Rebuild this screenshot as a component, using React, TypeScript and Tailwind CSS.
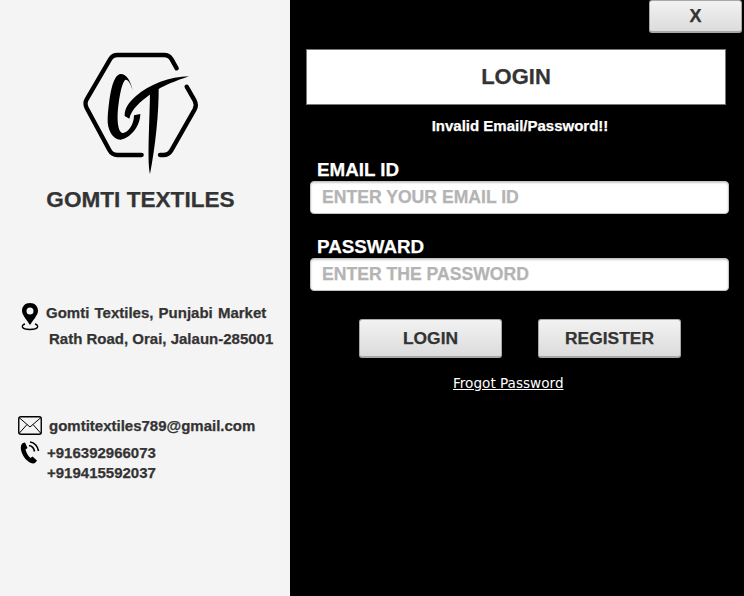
const sans = 'font-["Liberation_Sans",Arial,sans-serif]';
const heavy = '[-webkit-text-stroke:0.25px]';

function Logo() {
  return (
    <svg width="190" height="140" viewBox="0 0 570 420" className="block">
      <path
        d="M350 85 L335 58 Q327 45 312 45 L172 45 Q158 45 150 58 L80 178 Q73 190 80 204 L148 330 Q156 345 172 345 L245 345 M300 345 L310 345 Q326 345 334 331 L404 208 Q411 195 404 182 L380 140"
        fill="none"
        stroke="#000"
        strokeWidth="13"
        strokeLinecap="round"
      />
      <path
        d="M218 150 C212 125 200 102 182 102 C158 104 148 165 143 235 C141 272 160 300 182 299 C208 296 240 262 241 222 L222 226 C222 255 202 282 186 279 C172 272 170 230 176 190 C180 160 187 125 196 119 C205 118 212 132 218 150Z"
        fill="#000"
      />
      <path
        d="M387 109 C330 110 268 133 228 168 C208 185 193 205 194 228 L208 236 C214 208 240 186 275 160 C310 136 350 122 387 109Z"
        fill="#000"
      />
      <path d="M270 152 L296 136 C297 220 286 320 270 402 C261 360 269 250 270 152Z" fill="#000" />
    </svg>
  );
}

function PinIcon() {
  return (
    <svg width="20" height="29" viewBox="0 0 20 29" className="shrink-0">
      <path
        fillRule="evenodd"
        d="M10 1 C5 1 2 4.5 2 9 C2 13 7 18 10 23 C13 18 18 13 18 9 C18 4.5 15 1 10 1Z M10 5.5 A3.5 3.5 0 1 1 10 12.5 A3.5 3.5 0 1 1 10 5.5Z"
        fill="#000"
      />
      <path d="M5 22 C1 23 0.5 27.5 10 27.5 C19.5 27.5 19 23 15 22" fill="none" stroke="#000" strokeWidth="1.3" />
    </svg>
  );
}

function MailIcon() {
  return (
    <svg width="24" height="19" viewBox="0 0 24 19" className="shrink-0">
      <rect x="0.75" y="0.75" width="22.5" height="17.5" rx="2" fill="none" stroke="#000" strokeWidth="1.4" />
      <path d="M1 1.5 L12 11 L23 1.5 M1 17.5 L9 8.5 M23 17.5 L15 8.5" fill="none" stroke="#000" strokeWidth="1" />
    </svg>
  );
}

function PhoneIcon() {
  return (
    <svg width="20" height="23" viewBox="0 0 20 23" className="shrink-0">
      <path
        d="M1 5 C0 9 3 17 9 21 C11 22.5 14 23 15.5 21.5 L17 19.5 L12.5 15.5 L10.5 17 C8 15 6 11 5.5 8.5 L7.5 7 L5 1.5 L3 2 C2 2.5 1.3 3.5 1 5Z"
        fill="#000"
      />
      <path d="M9 4.5 C12 5 14 7.5 14.5 10.5 M10 1 C14.5 1.5 18 5.5 18.5 10" fill="none" stroke="#000" strokeWidth="1.6" />
    </svg>
  );
}

function GrayButton({ label, className }: { label: string; className: string }) {
  return (
    <button
      className={`${sans} ${heavy} rounded-[3px] border border-[#a8a8a8] border-b-2 bg-gradient-to-b from-[#f2f2f2] to-[#dcdcdc] pt-[1px] font-bold text-[#333] ${className}`}
    >
      {label}
    </button>
  );
}

function Field({ label, placeholder, className }: { label: string; placeholder: string; className?: string }) {
  return (
    <div className={className}>
      <div className={`${sans} ${heavy} pl-[7px] text-[18.8px] leading-[21px] font-bold text-white`}>{label}</div>
      <input
        readOnly
        placeholder={placeholder}
        className={`${sans} ${heavy} mt-[1px] block h-[33px] w-[419px] rounded-[4px] border border-[#c4c4c4] bg-white px-[11px] text-[17.6px] font-bold shadow-[inset_0_1px_2px_rgba(0,0,0,0.2)] outline-none placeholder:text-[#b4b4b4]`}
      />
    </div>
  );
}

export default function App() {
  return (
    <div className={`${sans} flex h-[596px] w-[744px] overflow-hidden`}>
      {/* Left side - company info */}
      <div className="w-[290px] shrink-0 bg-[#f4f4f4] text-[#333]">
        <div className="pt-[40px] pl-[60px]">
          <Logo />
        </div>
        <h1 className={`${heavy} mt-[8px] pr-[9px] text-center text-[22.6px] leading-[23px] font-bold`}>GOMTI TEXTILES</h1>

        <div className="mt-[91px] flex pl-[20px]">
          <PinIcon />
          <div className={`${heavy} pt-[2px] text-[15px] leading-[17px] font-bold`}>
            <div className="pl-[6px] whitespace-nowrap [word-spacing:1px]">Gomti Textiles, Punjabi Market</div>
            <div className="mt-[9px] pl-[9px] whitespace-nowrap">Rath Road, Orai, Jalaun-285001</div>
          </div>
        </div>

        <div className="mt-[69px] flex items-center pl-[18px]">
          <MailIcon />
          <span className={`${heavy} ml-[7px] text-[15px] leading-[17px] font-bold`}>gomtitextiles789@gmail.com</span>
        </div>
        <div className="mt-[6px] flex pl-[20px]">
          <PhoneIcon />
          <div className={`${heavy} ml-[7px] pt-[2px] text-[15px] leading-[20px] font-bold`}>
            <div>+916392966073</div>
            <div>+919415592037</div>
          </div>
        </div>
      </div>

      {/* Right side - login form */}
      <div className="flex-1 bg-black">
        <div className="flex justify-end pr-[2px]">
          <GrayButton label="X" className="h-[33px] w-[93px] text-[18px]" />
        </div>
        <div className={`${heavy} mt-[16px] ml-[16px] flex h-[56px] w-[420px] items-center justify-center border border-[#777] bg-white pb-[1px] text-[22px] font-bold text-[#333]`}>
          LOGIN
        </div>
        <div className={`${heavy} mt-[12px] pl-[6px] text-center text-[15px] leading-[17px] font-bold text-white`}>
          Invalid Email/Password!!
        </div>
        <Field label="EMAIL ID" placeholder="ENTER YOUR EMAIL ID" className="mt-[25px] ml-[20px]" />
        <Field label="PASSWARD" placeholder="ENTER THE PASSWORD" className="mt-[22px] ml-[20px]" />
        <div className="mt-[28px] ml-[69px] flex gap-[36px]">
          <GrayButton label="LOGIN" className="h-[39px] w-[143px] text-[17.4px]" />
          <GrayButton label="REGISTER" className="h-[39px] w-[143px] text-[17.4px]" />
        </div>
        <div className="mt-[17px] ml-[163px] font-['DejaVu_Sans',sans-serif] text-[13.6px] leading-[16px] text-white underline">
          Frogot Password
        </div>
      </div>
    </div>
  );
}
